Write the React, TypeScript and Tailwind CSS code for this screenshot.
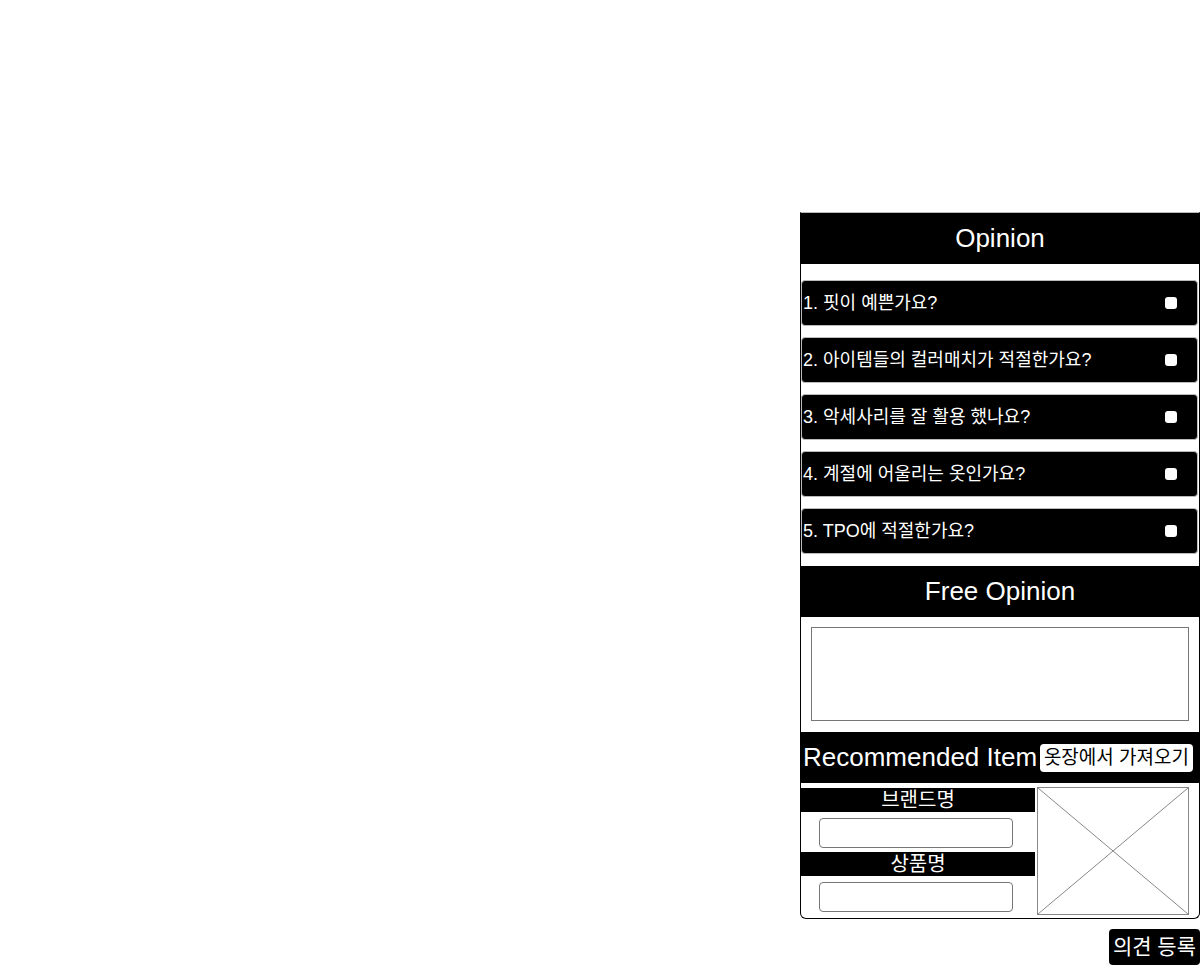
const font = { fontFamily: '"Liberation Sans", "Noto Sans CJK KR", sans-serif' }

const questions = [
  '1. 핏이 예쁜가요?',
  '2. 아이템들의 컬러매치가 적절한가요?',
  '3. 악세사리를 잘 활용 했나요?',
  '4. 계절에 어울리는 옷인가요?',
  '5. TPO에 적절한가요?',
]

function Header({ title }: { title: string }) {
  return (
    <div className="h-[51px] bg-black flex items-center justify-center text-white text-[26px]">
      {title}
    </div>
  )
}

function Question({ text }: { text: string }) {
  return (
    <div className="h-[46px] mr-[1px] bg-black rounded-[4px] border border-[#bbb] flex items-center justify-between pl-[1px] pr-[20px] text-white text-[18px]">
      <span>{text}</span>
      <span className="w-[12px] h-[12px] bg-white rounded-[3px]" />
    </div>
  )
}

export default function App() {
  return (
    <div className="min-h-screen bg-white flex justify-end" style={font}>
      <div className="w-[400px] pt-[212px] flex flex-col">
        <div className="border border-black border-t-[#bbb] rounded-b-[6px] flex flex-col">
          <Header title="Opinion" />
          <div className="flex flex-col gap-[11px] pt-[16px]">
            {questions.map((q) => (
              <Question key={q} text={q} />
            ))}
          </div>
          <div className="mt-[12px]">
            <Header title="Free Opinion" />
          </div>
          <div className="px-[10px] pt-[10px] pb-[11px]">
            <textarea className="block w-full h-[94px] border border-[#767676] resize-none" />
          </div>
          <div className="h-[51px] bg-black flex items-center justify-between pl-[2px] pr-[6px] text-white">
            <span className="text-[26px]">Recommended Item</span>
            <button className="h-[28px] px-[4px] bg-white text-black text-[19px] rounded-[4px]">옷장에서 가져오기</button>
          </div>
          <div className="flex pt-[4px] pb-[3px]">
            <div className="w-[234px] flex flex-col pt-[1px]">
              <div className="h-[24px] bg-black text-white text-[20px] flex items-center justify-center">브랜드명</div>
              <input className="mt-[6px] ml-[18px] w-[194px] h-[30px] border border-[#767676] rounded-[4px]" />
              <div className="mt-[4px] h-[24px] bg-black text-white text-[20px] flex items-center justify-center">상품명</div>
              <input className="mt-[6px] ml-[18px] w-[194px] h-[30px] border border-[#767676] rounded-[4px]" />
            </div>
            <div className="ml-[2px] w-[152px] h-[128px] border border-[#888]">
              <svg width="150" height="126" viewBox="0 0 150 126" className="block">
                <line x1="0" y1="0" x2="150" y2="126" stroke="#888" strokeWidth="1" />
                <line x1="150" y1="0" x2="0" y2="126" stroke="#888" strokeWidth="1" />
              </svg>
            </div>
          </div>
        </div>
        <div className="flex justify-end mt-[10px]">
          <button className="h-[36px] px-[4px] bg-black text-white text-[21px] rounded-[4px]">의견 등록</button>
        </div>
      </div>
    </div>
  )
}
